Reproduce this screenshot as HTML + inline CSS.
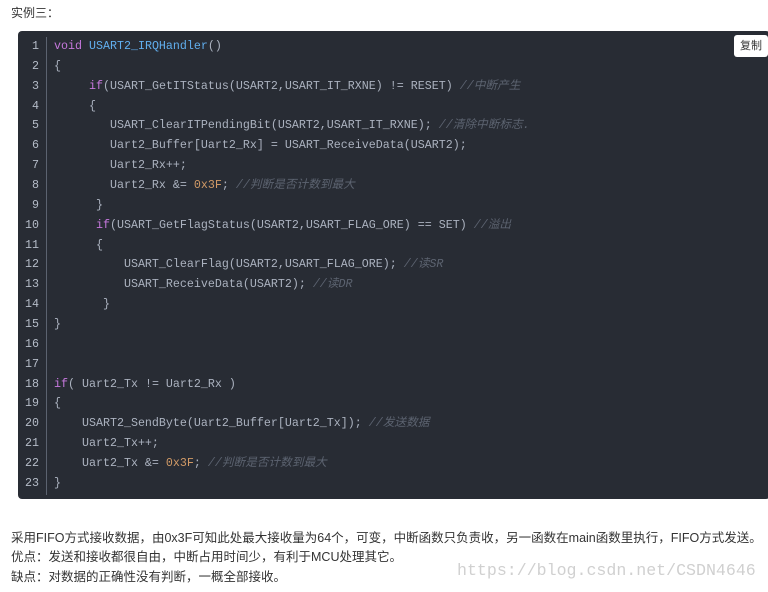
<!DOCTYPE html>
<html><head><meta charset="utf-8"><style>
html,body{margin:0;padding:0;background:#fff;width:768px;height:592px;overflow:hidden;position:relative}
body{font-family:"Liberation Sans","Noto Sans CJK SC",sans-serif;color:#333;font-size:12px}
.t{position:absolute;left:11px;white-space:nowrap;line-height:16px}
.code{position:absolute;left:18px;top:31px;width:752px;height:468px;background:#282c34;border-radius:4px}
.gut{position:absolute;left:28px;top:6px;width:1px;height:458px;background:#5c6370}
.ln{position:absolute;left:0;width:21px;text-align:right;color:#b5bcc8;font:11.66px/19.86px "Liberation Mono","Noto Sans CJK SC",monospace}
.cl{position:absolute;left:36px;white-space:pre;color:#abb2bf;font:11.66px/19.86px "Liberation Mono","Noto Sans CJK SC",monospace}
.k{color:#c678dd}.f{color:#61aeee}.n{color:#d19a66}.c{color:#5c6370;font-style:italic}
.btn{position:absolute;right:2px;top:4px;width:34px;height:22px;background:#fff;border-radius:3px;color:#333;font-size:11px;line-height:22px;text-align:center}
.wm{position:absolute;left:457px;top:561px;font:16.6px "Liberation Mono","Noto Sans CJK SC",monospace;color:#d0d0d0}
</style></head><body>
<div class="t" style="top:5px">实例三：</div>
<div class="code">
<div class="gut"></div>
<div class="btn">复制</div>
<div class="ln" style="top:6px">1<br>2<br>3<br>4<br>5<br>6<br>7<br>8<br>9<br>10<br>11<br>12<br>13<br>14<br>15<br>16<br>17<br>18<br>19<br>20<br>21<br>22<br>23</div>
<div class="cl" style="top:6px"><span class="k">void</span> <span class="f">USART2_IRQHandler</span>()
{
     <span class="k">if</span>(USART_GetITStatus(USART2,USART_IT_RXNE) != RESET) <span class="c">//中断产生</span>
     {
        USART_ClearITPendingBit(USART2,USART_IT_RXNE); <span class="c">//清除中断标志.</span>
        Uart2_Buffer[Uart2_Rx] = USART_ReceiveData(USART2);
        Uart2_Rx++;
        Uart2_Rx &amp;= <span class="n">0x3F</span>; <span class="c">//判断是否计数到最大</span>
      }
      <span class="k">if</span>(USART_GetFlagStatus(USART2,USART_FLAG_ORE) == SET) <span class="c">//溢出</span>
      {
          USART_ClearFlag(USART2,USART_FLAG_ORE); <span class="c">//读SR</span>
          USART_ReceiveData(USART2); <span class="c">//读DR</span>
       }
}


<span class="k">if</span>( Uart2_Tx != Uart2_Rx )
{
    USART2_SendByte(Uart2_Buffer[Uart2_Tx]); <span class="c">//发送数据</span>
    Uart2_Tx++;
    Uart2_Tx &amp;= <span class="n">0x3F</span>; <span class="c">//判断是否计数到最大</span>
}</div>
</div>
<div class="t" style="top:530px;font-size:12.5px">采用FIFO方式接收数据，由0x3F可知此处最大接收量为64个，可变，中断函数只负责收，另一函数在main函数里执行，FIFO方式发送。</div>
<div class="t" style="top:549px;font-size:12.5px">优点：发送和接收都很自由，中断占用时间少，有利于MCU处理其它。</div>
<div class="t" style="top:569px;font-size:12.5px">缺点：对数据的正确性没有判断，一概全部接收。</div>
<div class="wm">https://blog.csdn.net/CSDN4646</div>
</body></html>
